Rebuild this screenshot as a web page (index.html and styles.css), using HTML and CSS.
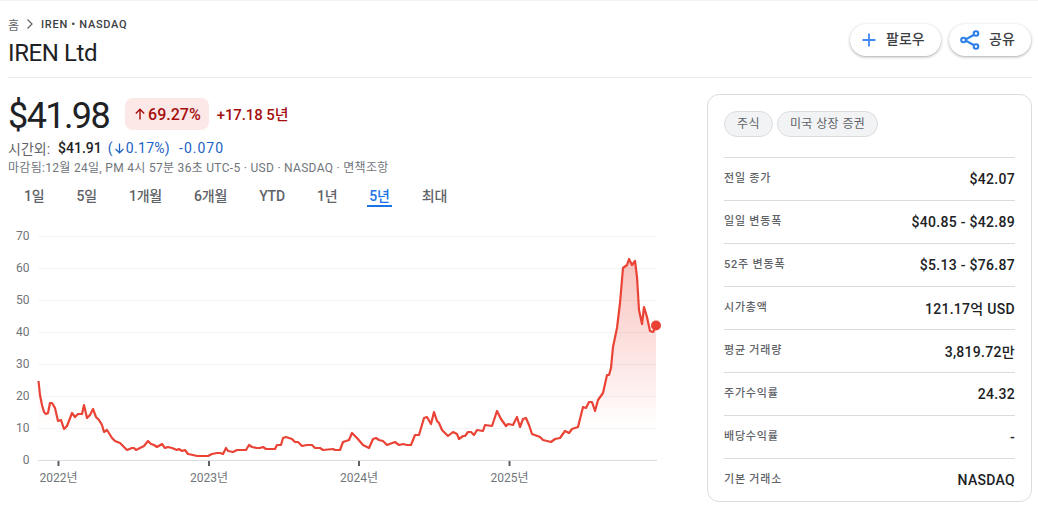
FILE: index.html
```html
<!DOCTYPE html>
<html lang="ko">
<head>
    <meta charset="UTF-8">
    <meta name="viewport" content="width=device-width, initial-scale=1.0">
    <title>IREN Ltd</title>
    <link rel="stylesheet" href="styles.css">
</head>
<body>
    <header class="top">
        <div class="top-left">
            <div class="crumbs">
                <a class="crumb-home">홈</a>
                <svg class="crumb-sep" width="16" height="16" viewBox="0 0 16 16"><path d="M5.500 3.500 10 8l-4.500 4.500" fill="none" stroke="#5f6368" stroke-width="1.200"/></svg>
                <span class="crumb-now">IREN • NASDAQ</span>
            </div>
            <h1 class="name">IREN Ltd</h1>
        </div>
        <div class="actions">
            <button class="pill follow">
                <svg width="18" height="18" viewBox="0 0 18 18"><path d="M9 2.500v13M2.500 9h13" fill="none" stroke="#4285f4" stroke-width="1.800"/></svg>
                <span>팔로우</span>
            </button>
            <button class="pill share">
                <svg width="22" height="22" viewBox="0 0 22 22"><path d="M16.500 5 5.500 11l11 6" fill="none" stroke="#2b7de9" stroke-width="2"/><circle cx="17" cy="4.500" r="2.300" fill="#fff" stroke="#2b7de9" stroke-width="2"/><circle cx="4.500" cy="11" r="2.300" fill="#fff" stroke="#2b7de9" stroke-width="2"/><circle cx="17" cy="17.500" r="2.300" fill="#fff" stroke="#2b7de9" stroke-width="2"/></svg>
                <span>공유</span>
            </button>
        </div>
    </header>

    <main class="main">
        <section class="quote">
            <div class="price-row">
                <div class="price">$41.98</div>
                <div class="badge">
                    <svg width="14" height="14" viewBox="0 0 14 14"><path d="M7 12.500V2.500M2.800 6.500 7 2.300l4.200 4.200" fill="none" stroke="#a50e0e" stroke-width="1.400"/></svg>
                    <span>69.27%</span>
                </div>
                <div class="change">+17.18 5년</div>
            </div>
            <div class="after">
                <span class="after-label">시간외:</span>
                <span class="after-price">$41.91</span>
                <span class="after-pct">(<svg width="13" height="13" viewBox="0 0 14 14"><path d="M7 1.500v10M2.800 7.500 7 11.700l4.200-4.200" fill="none" stroke="#1a62c5" stroke-width="1.400"/></svg>0.17%)</span>
                <span class="after-diff">-0.070</span>
            </div>
            <div class="meta">마감됨:12월 24일, PM 4시 57분 36초 UTC-5 · USD · NASDAQ · 면책조항</div>
            <nav class="ranges">
                <a>1일</a>
                <a>5일</a>
                <a>1개월</a>
                <a>6개월</a>
                <a>YTD</a>
                <a>1년</a>
                <a class="active">5년</a>
                <a>최대</a>
            </nav>
            <svg class="chart" width="680" height="270" viewBox="8 225 680 270">
                <defs>
                    <linearGradient id="under" x1="0" y1="259" x2="0" y2="430" gradientUnits="userSpaceOnUse">
                        <stop offset="0" stop-color="#ea4335" stop-opacity="0.32"/>
                        <stop offset="1" stop-color="#ea4335" stop-opacity="0"/>
                    </linearGradient>
                </defs>
                <g class="grid">
                    <line x1="38" x2="657" y1="236.500" y2="236.500"/>
                    <line x1="38" x2="657" y1="268.500" y2="268.500"/>
                    <line x1="38" x2="657" y1="300.500" y2="300.500"/>
                    <line x1="38" x2="657" y1="332.500" y2="332.500"/>
                    <line x1="38" x2="657" y1="364.500" y2="364.500"/>
                    <line x1="38" x2="657" y1="396.500" y2="396.500"/>
                    <line x1="38" x2="657" y1="428.500" y2="428.500"/>
                </g>
                <line class="base" x1="38" x2="657" y1="460.500" y2="460.500"/>
                <g class="ylabels">
                    <text x="29.500" y="240">70</text>
                    <text x="29.500" y="272">60</text>
                    <text x="29.500" y="304">50</text>
                    <text x="29.500" y="336">40</text>
                    <text x="29.500" y="368">30</text>
                    <text x="29.500" y="400">20</text>
                    <text x="29.500" y="432">10</text>
                    <text x="29.500" y="464">0</text>
                </g>
                <g class="ticks">
                    <line x1="58.500" x2="58.500" y1="461" y2="466"/>
                    <line x1="209" x2="209" y1="461" y2="466"/>
                    <line x1="359" x2="359" y1="461" y2="466"/>
                    <line x1="509.500" x2="509.500" y1="461" y2="466"/>
                </g>
                <g class="xlabels">
                    <text x="58.500" y="482">2022년</text>
                    <text x="209" y="482">2023년</text>
                    <text x="359" y="482">2024년</text>
                    <text x="509.500" y="482">2025년</text>
                </g>
                <path class="area" d="M38.500 381L40 395 42 405 44 412 46 414 48 413 50 403 52 403 55 408 58 421 61 420 64 429 67 426 72 413 75 417 78 414 82 414 84 405 87 418 90 415 93 409 96 417 99 420 102 425 104 432 107 430 112 438 115 441 120 443 123 446 127 450 132 448 134 448 136 450 140 448 144 446 148 441 151 444 154 445 157 447 162 444 165 448 168 447 172 448 177 450 179 449 182 451 185 450 188 454 193 455 197 456 203 456 208 456 212 454 217 453 220 453 223 454 226 448 228 451 233 452 237 450 246 450 249 445 252 447 257 448 260 448 263 447 266 449 275 449 277 445 281 445 283 438 286 437 292 439 295 442 298 442 302 446 307 445 312 445 315 448 320 448 323 450 333 449 335 450 340 450 343 442 349 440 352 433 357 438 363 445 369 448 373 439 376 438 379 440 383 441 387 445 395 442 399 445 403 444 407 445 411 445 415 435 419 435 424 418 427 417 431 424 434 412 437 421 439 423 442 430 448 436 453 432 457 434 459 439 463 436 465 436 468 432 471 432 474 435 477 430 483 431 485 425 492 426 497 411 501 419 506 426 508 424 513 425 517 417 520 427 523 419 526 418 529 425 532 434 540 437 543 440 551 442 555 439 560 438 565 431 569 433 572 429 578 427 583 407 586 408 589 402 592 402 595 411 598 400 603 393 607 375 609 375 611 368 613 347 617 328 620 303 623 268 627 265 629 259 632 265 635 261 637 277 639 310 642 324 644 307 647 317 650 331 653 332 656 326V460H38.500Z"/>
                <path class="line" d="M38.500 381L40 395 42 405 44 412 46 414 48 413 50 403 52 403 55 408 58 421 61 420 64 429 67 426 72 413 75 417 78 414 82 414 84 405 87 418 90 415 93 409 96 417 99 420 102 425 104 432 107 430 112 438 115 441 120 443 123 446 127 450 132 448 134 448 136 450 140 448 144 446 148 441 151 444 154 445 157 447 162 444 165 448 168 447 172 448 177 450 179 449 182 451 185 450 188 454 193 455 197 456 203 456 208 456 212 454 217 453 220 453 223 454 226 448 228 451 233 452 237 450 246 450 249 445 252 447 257 448 260 448 263 447 266 449 275 449 277 445 281 445 283 438 286 437 292 439 295 442 298 442 302 446 307 445 312 445 315 448 320 448 323 450 333 449 335 450 340 450 343 442 349 440 352 433 357 438 363 445 369 448 373 439 376 438 379 440 383 441 387 445 395 442 399 445 403 444 407 445 411 445 415 435 419 435 424 418 427 417 431 424 434 412 437 421 439 423 442 430 448 436 453 432 457 434 459 439 463 436 465 436 468 432 471 432 474 435 477 430 483 431 485 425 492 426 497 411 501 419 506 426 508 424 513 425 517 417 520 427 523 419 526 418 529 425 532 434 540 437 543 440 551 442 555 439 560 438 565 431 569 433 572 429 578 427 583 407 586 408 589 402 592 402 595 411 598 400 603 393 607 375 609 375 611 368 613 347 617 328 620 303 623 268 627 265 629 259 632 265 635 261 637 277 639 310 642 324 644 307 647 317 650 331 653 332 656 326"/>
                <circle class="dot" cx="656" cy="325.500" r="5"/>
            </svg>
        </section>

        <aside class="card">
            <div class="chips">
                <span class="chip">주식</span>
                <span class="chip">미국 상장 증권</span>
            </div>
            <div class="stats">
                <div class="stat"><span class="stat-label">전일 종가</span><span class="stat-value">$42.07</span></div>
                <div class="stat"><span class="stat-label">일일 변동폭</span><span class="stat-value">$40.85 - $42.89</span></div>
                <div class="stat"><span class="stat-label">52주 변동폭</span><span class="stat-value">$5.13 - $76.87</span></div>
                <div class="stat"><span class="stat-label">시가총액</span><span class="stat-value">121.17억 USD</span></div>
                <div class="stat"><span class="stat-label">평균 거래량</span><span class="stat-value">3,819.72만</span></div>
                <div class="stat"><span class="stat-label">주가수익률</span><span class="stat-value">24.32</span></div>
                <div class="stat"><span class="stat-label">배당수익률</span><span class="stat-value">-</span></div>
                <div class="stat"><span class="stat-label">기본 거래소</span><span class="stat-value">NASDAQ</span></div>
            </div>
        </aside>
    </main>
</body>
</html>
```

FILE: styles.css
```css
body {
    font-family: Roboto, "Noto Sans CJK KR", sans-serif;
    background-color: #fff;
    color: #202124;
    margin: 0;
    padding: 0;
    border-top: 1px solid #f1f3f4;
    overflow: hidden;
}
.top {
    display: flex;
    justify-content: space-between;
    margin: 0 6px 0 8px;
    height: 76px;
    border-bottom: 1px solid #e8eaed;
}
.crumbs {
    display: flex;
    align-items: center;
    gap: 3px;
    margin-top: 15px;
    height: 16px;
    font-size: 11px;
}
.crumb-home {
    font-size: 12px;
    color: #5f6368;
}
.crumb-now {
    font-weight: 500;
    letter-spacing: 0.7px;
    color: #3c4043;
}
.name {
    margin: 5px 0 0;
    font-size: 24px;
    font-weight: 400;
    line-height: 32px;
    letter-spacing: -0.4px;
}
.actions {
    display: flex;
    gap: 8px;
    margin-top: 23px;
    margin-right: 1px;
    align-items: flex-start;
}
.pill {
    display: flex;
    align-items: center;
    height: 32px;
    border: none;
    border-radius: 16px;
    background-color: #fff;
    box-shadow: 0 1px 3px rgba(60, 64, 67, 0.45);
    color: #3c4043;
    font-family: inherit;
    font-size: 14px;
    font-weight: 500;
    line-height: 30px;
    padding: 0;
}
.pill span {
    margin-bottom: 2px;
}
.follow {
    width: 91px;
    padding-left: 10px;
    gap: 8px;
}
.share {
    width: 82px;
    padding-left: 10px;
    gap: 8px;
}
.main {
    display: flex;
    justify-content: space-between;
    margin: 16px 6px 0 8px;
}
.quote {
    width: 680px;
}
.price-row {
    display: flex;
    align-items: center;
    height: 44px;
}
.price {
    font-size: 36px;
    line-height: 44px;
    letter-spacing: -1.6px;
}
.badge {
    display: flex;
    align-items: center;
    gap: 1px;
    margin-left: 16px;
    margin-bottom: 4px;
    padding: 0 8px;
    height: 32px;
    border-radius: 8px;
    background-color: #fce8e6;
    color: #a50e0e;
    font-size: 16px;
    font-weight: 500;
}
.change {
    margin-left: 8px;
    margin-bottom: 5px;
    color: #a50e0e;
    font-size: 15px;
    font-weight: 500;
    letter-spacing: -0.1px;
}
.after {
    display: flex;
    align-items: center;
    height: 20px;
    font-size: 14px;
}
.after-label {
    color: #5f6368;
}
.after-price {
    margin-left: 8px;
    font-weight: 500;
}
.after-pct {
    display: flex;
    align-items: center;
    margin-left: 6px;
    color: #1a62c5;
    letter-spacing: 0.3px;
}
.after-diff {
    margin-left: 9px;
    color: #1a62c5;
    letter-spacing: 1px;
}
.meta {
    margin-top: 1px;
    font-size: 12px;
    line-height: 18px;
    letter-spacing: 0.3px;
    color: #70757a;
}
.ranges {
    display: flex;
    gap: 32px;
    margin: 9px 0 0 16px;
    height: 26px;
    font-size: 14px;
    font-weight: 500;
    letter-spacing: -0.2px;
    color: #5f6368;
}
.ranges a {
    height: 21px;
    line-height: 20px;
}
.ranges .active {
    color: #1a73e8;
    position: relative;
}
.ranges .active::after {
    content: "";
    position: absolute;
    left: -2px;
    right: -2px;
    bottom: 0;
    height: 2px;
    background-color: #1a73e8;
}
.chart {
    display: block;
    margin-top: 13px;
}
.grid line {
    stroke: #f1f3f4;
    stroke-width: 1;
}
.base {
    stroke: #dadce0;
    stroke-width: 1;
}
.ticks line {
    stroke: #5f6368;
    stroke-width: 2;
}
.ylabels text {
    font-size: 12px;
    fill: #70757a;
    text-anchor: end;
}
.xlabels text {
    font-size: 12px;
    fill: #70757a;
    text-anchor: middle;
}
.area {
    fill: url(#under);
}
.line {
    fill: none;
    stroke: #ea4335;
    stroke-width: 2.200;
    stroke-linejoin: round;
}
.dot {
    fill: #ea4335;
}
.card {
    box-sizing: border-box;
    width: 325px;
    height: 408px;
    padding: 16px;
    border: 1px solid #dadce0;
    border-radius: 12px;
}
.chips {
    display: flex;
    gap: 4px;
    height: 46px;
}
.chip {
    box-sizing: border-box;
    height: 26px;
    padding: 0 12px;
    border: 1px solid #dadce0;
    border-radius: 13px;
    background-color: #f1f3f4;
    color: #5f6368;
    font-size: 12px;
    line-height: 24px;
    letter-spacing: 0.4px;
}
.stat {
    box-sizing: border-box;
    display: flex;
    justify-content: space-between;
    align-items: center;
    height: 43px;
    border-top: 1px solid #dadce0;
}
.stat-label {
    font-size: 11px;
    font-weight: 500;
    letter-spacing: 0.8px;
    line-height: 16px;
    color: #5f6368;
}
.stat-value {
    font-size: 14px;
    font-weight: 500;
    letter-spacing: 0.3px;
    color: #202124;
}
```
